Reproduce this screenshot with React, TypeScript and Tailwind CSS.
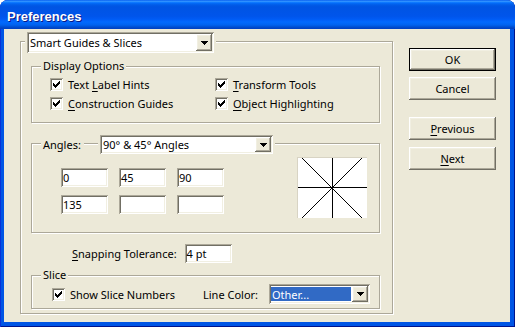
import React from "react";

const sunken =
  "shadow-[inset_1px_1px_0_#ACA899,inset_-1px_-1px_0_#FFFFFF,inset_2px_2px_0_#716F64,inset_-2px_-2px_0_#F1EFE2]";
const raised =
  "shadow-[inset_-1px_-1px_0_#716F64,inset_1px_1px_0_#FFFFFF,inset_-2px_-2px_0_#ACA899,inset_2px_2px_0_#F1EFE2]";
const etched = "border border-[#ACA899] shadow-[inset_1px_1px_0_#FFFFFF,1px_1px_0_#FFFFFF]";

function Arrow() {
  return (
    <svg width="7" height="4" viewBox="0 0 7 4" className="block">
      <path d="M0 0h7v1H0zM1 1h5v1H1zM2 2h3v1H2zM3 3h1v1H3z" fill="#000" />
    </svg>
  );
}

function Combo({ className, text, selected }: { className: string; text: string; selected?: boolean }) {
  return (
    <div className={`${sunken} bg-white p-[2px] flex ${className}`}>
      <div className={`flex-1 flex items-center ${selected ? "my-[1px] mr-[1px] bg-[#316AC5] text-white" : ""}`}>
        <span className="pl-[1px] leading-[15px] whitespace-nowrap">{text}</span>
      </div>
      <div className={`${raised} bg-[#ECE9D8] w-[16px] flex items-center justify-center`}>
        <Arrow />
      </div>
    </div>
  );
}

function Check() {
  return (
    <div className={`${sunken} bg-white w-[13px] h-[13px] shrink-0`}>
      <svg width="13" height="13" viewBox="0 0 13 13" className="block">
        <path d="M3 5h1v3H3zM4 6h1v3H4zM5 7h1v3H5zM6 6h1v3H6zM7 5h1v3H7zM8 4h1v3H8zM9 3h1v3H9z" fill="#000" />
      </svg>
    </div>
  );
}

function CheckRow({ children }: { children: React.ReactNode }) {
  return (
    <div className="flex items-center gap-[5px] h-[13px]">
      <Check />
      <span className="whitespace-nowrap">{children}</span>
    </div>
  );
}

function U({ children }: { children: React.ReactNode }) {
  return <span className="underline underline-offset-[2px] decoration-1">{children}</span>;
}

function Field({ value }: { value?: string }) {
  return (
    <div className={`${sunken} bg-white w-[47px] h-[19px] p-[2px] leading-[15px] whitespace-nowrap`}>{value}</div>
  );
}

function Legend({ children }: { children: React.ReactNode }) {
  return <div className="-mt-[8px] ml-[9px] px-[2px] bg-[#ECE9D8] w-fit leading-[13px]">{children}</div>;
}

function Btn({ className, children }: { className: string; children: React.ReactNode }) {
  return (
    <div className={`${raised} h-[23px] flex items-center justify-center ${className}`}>
      <span>{children}</span>
    </div>
  );
}

function AnglePreview() {
  return (
    <div className="w-[70px] h-[61px] bg-white border-t border-l border-[#D8D4C4] shrink-0">
      <svg width="69" height="60" viewBox="0 0 69 60" className="block">
        <path d="M34.5 0V60M0 29.5H69" stroke="#000" strokeWidth="1" />
        <path d="M4 0L64 60M64 0L4 60" stroke="#000" strokeWidth="1" />
      </svg>
    </div>
  );
}

export default function App() {
  return (
    <div className="w-[515px] h-[327px] bg-white">
      <div className="w-[515px] h-[327px] rounded-t-[8px] bg-[#0055E5] flex flex-col shadow-[inset_1px_0_0_#0831D9,inset_-1px_0_0_#00138C,inset_0_-1px_0_#00138C]">
        <div className="h-[29px] shrink-0 rounded-t-[8px] bg-[linear-gradient(to_bottom,#0058ee_0%,#3593ff_4%,#288eff_6%,#127dff_8%,#036ffc_10%,#0262ee_14%,#0057e5_20%,#0054e3_24%,#0055eb_56%,#005bf5_66%,#026afe_76%,#0062ef_86%,#0052d6_92%,#0046c8_96%,#0040c0_100%)] pl-[7px] pt-[9px]">
          <div className="font-['Liberation_Sans',Arial,sans-serif] font-bold text-[13px] leading-[15px] text-white [text-shadow:1px_1px_0_#0A1883]">
            Preferences
          </div>
        </div>
        <div className="ml-[4px] w-[506px] h-[293px] bg-[#ECE9D8] flex items-start font-['Noto_Sans',sans-serif] text-[11px] leading-[13px] text-black">
          <div className={`mt-[12px] ml-[16px] w-[373px] h-[273px] shrink-0 ${etched} flex flex-col`}>
            <div className="-mt-[10px] ml-[4px] px-[2px] bg-[#ECE9D8] w-fit">
              <Combo className="w-[187px] h-[21px]" text="Smart Guides & Slices" />
            </div>

            <div className={`mt-[13px] ml-[10px] w-[349px] h-[57px] ${etched} flex flex-col`}>
              <Legend>Display Options</Legend>
              <div className="mt-[6px] ml-[18px] grid grid-cols-[165px_auto] gap-y-[6px]">
                <CheckRow>
                  Text <U>L</U>abel Hints
                </CheckRow>
                <CheckRow>
                  <U>T</U>ransform Tools
                </CheckRow>
                <CheckRow>
                  <U>C</U>onstruction Guides
                </CheckRow>
                <CheckRow>
                  <U>O</U>bject Highlighting
                </CheckRow>
              </div>
            </div>

            <div className={`mt-[20px] ml-[10px] w-[349px] h-[90px] ${etched} flex flex-col`}>
              <div className="-mt-[9px] ml-[9px] flex items-center">
                <div className="w-[43px] px-[2px] bg-[#ECE9D8] leading-[13px]">Angles:</div>
                <div className="ml-[14px] px-[2px] bg-[#ECE9D8]">
                  <Combo className="w-[173px] h-[19px]" text="90° & 45° Angles" />
                </div>
              </div>
              <div className="mt-[3px] flex items-start">
                <div className="ml-[29px] mt-[11px] grid grid-cols-[47px_47px_47px] gap-x-[11px] gap-y-[8px]">
                  <Field value="0" />
                  <Field value="45" />
                  <Field value="90" />
                  <Field value="135" />
                  <Field />
                  <Field />
                </div>
                <div className="ml-[73px]">
                  <AnglePreview />
                </div>
              </div>
            </div>

            <div className="mt-[11px] ml-[51px] flex items-center">
              <span className="whitespace-nowrap">
                <U>S</U>napping Tolerance:
              </span>
              <div className="ml-[8px]">
                <Field value="4 pt" />
              </div>
            </div>

            <div className={`mt-[12px] ml-[10px] w-[349px] h-[34px] ${etched} flex flex-col`}>
              <Legend>Slice</Legend>
              <div className="mt-[3px] ml-[20px] flex items-center">
                <div className="w-[151px]">
                  <CheckRow>Show Slice Numbers</CheckRow>
                </div>
                <span className="w-[66px] whitespace-nowrap">Line Color:</span>
                <Combo className="w-[101px] h-[20px]" text="Other..." selected />
              </div>
            </div>
          </div>

          <div className="ml-[16px] mt-[19px] w-[87px] flex flex-col">
            <div className="border border-black h-[23px]">
              <div className={`${raised} h-full flex items-center justify-center`}>OK</div>
            </div>
            <Btn className="mt-[6px]">Cancel</Btn>
            <Btn className="mt-[17px]">
              <U>P</U>revious
            </Btn>
            <Btn className="mt-[7px]">
              <U>N</U>ext
            </Btn>
          </div>
        </div>
      </div>
    </div>
  );
}
